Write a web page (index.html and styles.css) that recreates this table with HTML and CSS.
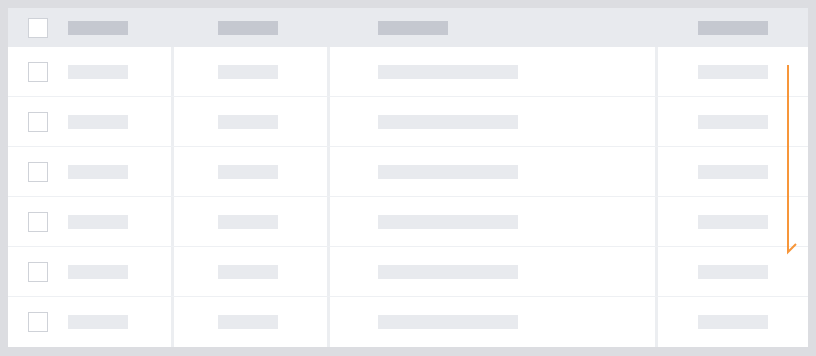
FILE: index.html
```html
<!DOCTYPE html>
<html lang="en">
<head>
<meta charset="utf-8">
<title>Table skeleton</title>
<link rel="stylesheet" href="styles.css">
</head>
<body>
<div class="card">
  <div class="row head">
    <div class="cell c1"><span class="box"></span><span class="bar w60"></span></div>
    <div class="sep"></div>
    <div class="cell c2"><span class="bar w60"></span></div>
    <div class="sep"></div>
    <div class="cell c3"><span class="bar w70"></span></div>
    <div class="sep"></div>
    <div class="cell c4"><span class="bar w70"></span></div>
  </div>
  <div class="row">
    <div class="cell c1"><span class="box"></span><span class="bar w60"></span></div>
    <div class="sep"></div>
    <div class="cell c2"><span class="bar w60"></span></div>
    <div class="sep"></div>
    <div class="cell c3"><span class="bar w140"></span></div>
    <div class="sep"></div>
    <div class="cell c4"><span class="bar w70"></span></div>
  </div>
  <div class="row">
    <div class="cell c1"><span class="box"></span><span class="bar w60"></span></div>
    <div class="sep"></div>
    <div class="cell c2"><span class="bar w60"></span></div>
    <div class="sep"></div>
    <div class="cell c3"><span class="bar w140"></span></div>
    <div class="sep"></div>
    <div class="cell c4"><span class="bar w70"></span></div>
  </div>
  <div class="row">
    <div class="cell c1"><span class="box"></span><span class="bar w60"></span></div>
    <div class="sep"></div>
    <div class="cell c2"><span class="bar w60"></span></div>
    <div class="sep"></div>
    <div class="cell c3"><span class="bar w140"></span></div>
    <div class="sep"></div>
    <div class="cell c4"><span class="bar w70"></span></div>
  </div>
  <div class="row">
    <div class="cell c1"><span class="box"></span><span class="bar w60"></span></div>
    <div class="sep"></div>
    <div class="cell c2"><span class="bar w60"></span></div>
    <div class="sep"></div>
    <div class="cell c3"><span class="bar w140"></span></div>
    <div class="sep"></div>
    <div class="cell c4"><span class="bar w70"></span></div>
  </div>
  <div class="row">
    <div class="cell c1"><span class="box"></span><span class="bar w60"></span></div>
    <div class="sep"></div>
    <div class="cell c2"><span class="bar w60"></span></div>
    <div class="sep"></div>
    <div class="cell c3"><span class="bar w140"></span></div>
    <div class="sep"></div>
    <div class="cell c4"><span class="bar w70"></span></div>
  </div>
  <div class="row last">
    <div class="cell c1"><span class="box"></span><span class="bar w60"></span></div>
    <div class="sep"></div>
    <div class="cell c2"><span class="bar w60"></span></div>
    <div class="sep"></div>
    <div class="cell c3"><span class="bar w140"></span></div>
    <div class="sep"></div>
    <div class="cell c4"><span class="bar w70"></span></div>
  </div>
  <svg class="scroll-arrow" width="20" height="200" viewBox="0 0 20 200" aria-hidden="true">
    <polyline points="2,0 2,187 10,179" fill="none" stroke="#f7963a" stroke-width="2"/>
  </svg>
</div>
</body>
</html>
```

FILE: styles.css
```css
html, body {
  margin: 0;
  padding: 0;
}
body {
  background: #dcdde1;
  padding: 8px;
  font-family: "Liberation Sans", Arial, sans-serif;
}
.card {
  position: relative;
  width: 800px;
  height: 339px;
  background: #ffffff;
  overflow: hidden;
}
.row {
  display: grid;
  grid-template-columns: 163px 3px 153px 3px 325px 3px 150px;
  height: 50px;
  box-sizing: border-box;
  border-bottom: 1px solid #eef0f3;
}
.row.head {
  height: 39px;
  background: #e8eaee;
  border-bottom: none;
}
.row.last {
  border-bottom: none;
}
.sep {
  background: #eceef1;
}
.head .sep {
  background: transparent;
}
.cell {
  display: flex;
  align-items: center;
  box-sizing: border-box;
}
.c1 { padding-left: 20px; gap: 20px; }
.c2 { padding-left: 44px; }
.c3 { padding-left: 48px; }
.c4 { padding-left: 40px; }
.box {
  width: 20px;
  height: 20px;
  box-sizing: border-box;
  border: 1px solid #cfd2d8;
  background: #ffffff;
  flex: none;
}
.bar {
  height: 14px;
  background: #e8eaee;
  flex: none;
}
.head .bar {
  background: #c5c8d0;
}
.w60 { width: 60px; }
.w70 { width: 70px; }
.w140 { width: 140px; }
.scroll-arrow {
  position: absolute;
  left: 778px;
  top: 57px;
}
```
